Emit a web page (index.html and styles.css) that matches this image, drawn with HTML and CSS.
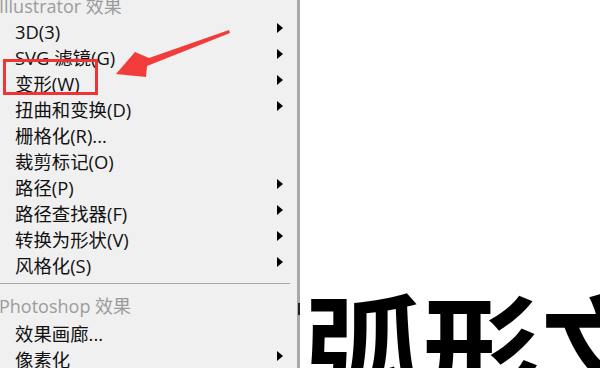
FILE: index.html
```html
<!DOCTYPE html>
<html lang="zh">
<head>
<meta charset="utf-8">
<title>效果菜单</title>
<link rel="stylesheet" href="styles.css">
</head>
<body>
<div class="page">
  <div class="menu">
    <div class="header">Illustrator 效果</div>
    <div class="item"><span>3D(3)</span><i class="sub"></i></div>
    <div class="item"><span>SVG 滤镜(G)</span><i class="sub"></i></div>
    <div class="item"><span>变形(W)</span><i class="sub"></i></div>
    <div class="item"><span>扭曲和变换(D)</span><i class="sub"></i></div>
    <div class="item"><span>栅格化(R)...</span></div>
    <div class="item"><span>裁剪标记(O)</span></div>
    <div class="item"><span>路径(P)</span><i class="sub"></i></div>
    <div class="item"><span>路径查找器(F)</span><i class="sub"></i></div>
    <div class="item"><span>转换为形状(V)</span><i class="sub"></i></div>
    <div class="item"><span>风格化(S)</span><i class="sub"></i></div>
    <div class="sep"></div>
    <div class="header">Photoshop 效果</div>
    <div class="item"><span>效果画廊...</span></div>
    <div class="item"><span>像素化</span><i class="sub"></i></div>
  </div>
  <div class="canvas">
    <div class="big">弧形文字</div>
  </div>
  <i class="mark"></i>
  <svg class="annot" width="600" height="368" viewBox="0 0 600 368">
    <rect x="4.5" y="60.5" width="92" height="33" fill="none" stroke="#ee3535" stroke-width="3"/>
    <polygon points="229,30 230,33 147,66 146,77 116,74 135,52 149,58" fill="#f23b3b"/>
  </svg>
</div>
</body>
</html>
```
FILE: styles.css
```css
html, body {
  margin: 0;
  padding: 0;
  background: #ffffff;
}
.page {
  position: relative;
  width: 600px;
  height: 368px;
  overflow: hidden;
  display: flex;
  font-family: "Open Sans", "Noto Sans CJK SC", sans-serif;
}
.menu {
  width: 297px;
  flex: none;
  background: #f0f0f0;
  border-right: 3px solid #a9a9a9;
  margin-top: -7.5px;
  display: flex;
  flex-direction: column;
}
.header {
  height: 26.3px;
  line-height: 26.3px;
  font-size: 18px;
  color: #9c9c9c;
  padding-left: 0;
  text-indent: -1px;
  white-space: nowrap;
}
.item {
  height: 26.3px;
  display: flex;
  align-items: center;
  justify-content: space-between;
  padding-left: 15px;
  padding-right: 14px;
  font-size: 18.4px;
  color: #111;
  white-space: nowrap;
}
.sub {
  width: 0;
  height: 0;
  border-left: 6px solid #000;
  border-top: 5px solid transparent;
  border-bottom: 5px solid transparent;
  margin-top: -6px;
}
.sep {
  height: 15.65px;
  flex: none;
  display: flex;
  flex-direction: column;
}
.sep::before {
  content: "";
  display: block;
  margin-top: 5.3px;
  width: 290px;
  height: 1px;
  background: #a8a8a8;
}
.canvas {
  flex: 1;
  background: #fff;
  padding-left: 5px;
  padding-top: 285px;
}
.big {
  font-family: "Noto Sans CJK SC", sans-serif;
  font-weight: 700;
  font-size: 117px;
  line-height: 1;
  letter-spacing: 1px;
  color: #000;
  white-space: nowrap;
}
.mark {
  position: absolute;
  left: 298px;
  top: 303px;
  width: 2px;
  height: 12px;
  background: #222;
}
.annot {
  position: absolute;
  left: 0;
  top: 0;
}
```
